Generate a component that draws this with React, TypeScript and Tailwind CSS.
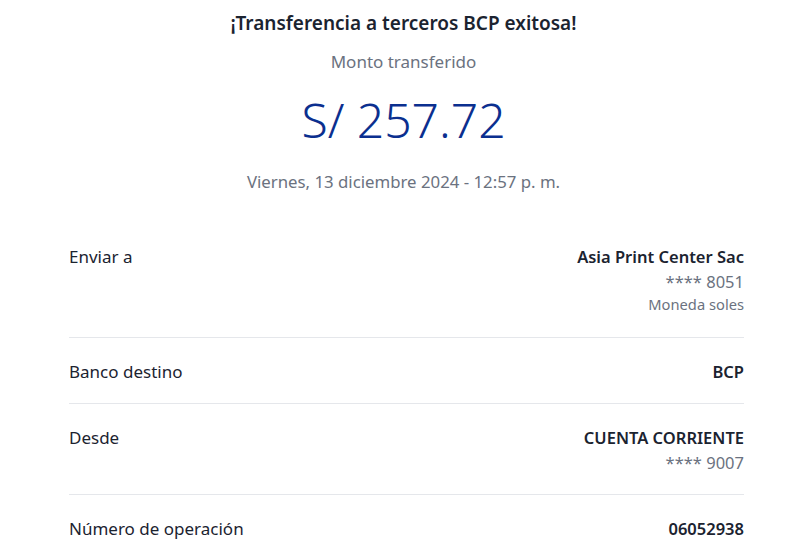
const strong = 'font-semibold text-[#1b2330] text-[16.5px] leading-[25px]'
const muted = 'text-[#6b7280] text-[16.5px] leading-[25px]'

const rows = [
  {
    label: 'Enviar a',
    values: [
      { text: 'Asia Print Center Sac', cls: strong },
      { text: '**** 8051', cls: muted },
      { text: 'Moneda soles', cls: 'text-[#6b7280] text-[14.7px] leading-[21px] mb-[3px]' },
    ],
  },
  { label: 'Banco destino', values: [{ text: 'BCP', cls: strong }] },
  {
    label: 'Desde',
    values: [
      { text: 'CUENTA CORRIENTE', cls: strong },
      { text: '**** 9007', cls: muted },
    ],
  },
  { label: 'Número de operación', values: [{ text: '06052938', cls: strong }] },
]

export default function App() {
  return (
    <div className="w-[807px] h-[550px] overflow-hidden bg-white font-['Noto_Sans',sans-serif]">
      <div className="flex flex-col items-center pt-[10px]">
        <h1 className="text-[19px] leading-[26px] font-semibold text-[#1b2330]">¡Transferencia a terceros BCP exitosa!</h1>
        <p className="mt-[13px] text-[17px] leading-[26px] text-[#6b7280]">Monto transferido</p>
        <p className="mt-[15px] text-[48px] leading-[60px] font-light text-[#0b2f8f]">S/ 257.72</p>
        <p className="mt-[19px] text-[16.8px] leading-[25px] text-[#6b7280]">Viernes, 13 diciembre 2024 - 12:57 p. m.</p>
      </div>
      <div className="mx-[69px] mt-[29px] w-[675px]">
        {rows.map((r, i) => (
          <div key={r.label} className={`flex justify-between pt-[21px] pb-[19px] ${i < rows.length - 1 ? 'border-b border-[#e5e7eb]' : ''}`}>
            <span className="text-[17px] leading-[25px] text-[#1b2330]">{r.label}</span>
            <div className="flex flex-col items-end">
              {r.values.map(v => (
                <span key={v.text} className={v.cls}>{v.text}</span>
              ))}
            </div>
          </div>
        ))}
      </div>
    </div>
  )
}
